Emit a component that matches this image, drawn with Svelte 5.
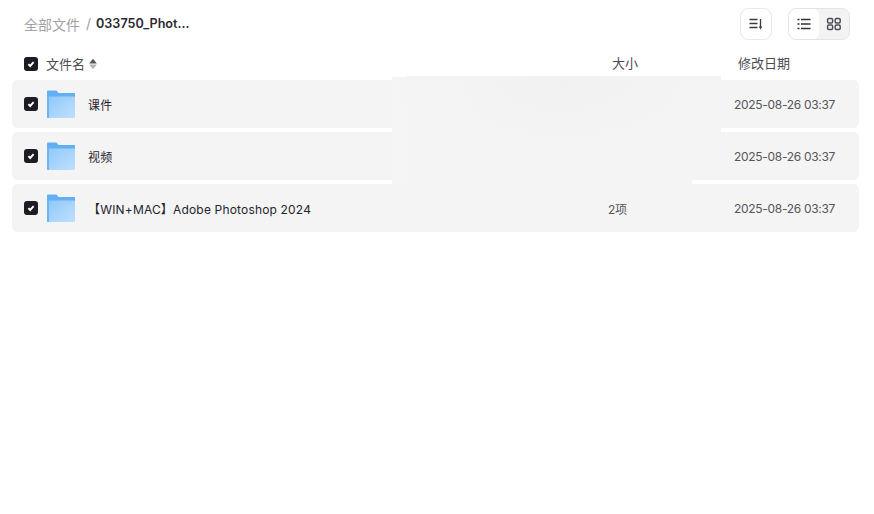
<script>
  const rows = [
    { name: '课件', size: '', date: '2025-08-26 03:37' },
    { name: '视频', size: '', date: '2025-08-26 03:37' },
    { name: '【WIN+MAC】Adobe Photoshop 2024', size: '2项', date: '2025-08-26 03:37' }
  ];
</script>

{#snippet check()}
  <span class="check">
    <svg width="14" height="14" viewBox="0 0 14 14"><path d="M4.400 7.200 6.200 9 9.600 5.200" fill="none" stroke="#fff" stroke-width="1.900"/></svg>
  </span>
{/snippet}

<div class="page">
  <header class="top">
    <nav class="crumbs">
      <span class="root">全部文件</span>
      <span class="sep">/</span>
      <span class="current">033750_Phot...</span>
    </nav>
    <div class="tools">
      <button class="sort" aria-label="排序">
        <svg width="16" height="16" viewBox="0 0 16 16"><path d="M1.500 3.500h8M1.500 7.500h8M1.500 11.500h8" stroke="#3a3a40" stroke-width="1.300" fill="none"/><path d="M12.500 3v9" stroke="#3a3a40" stroke-width="1.300"/><path d="M10.700 10.600h3.600L12.500 13.400z" fill="#3a3a40"/></svg>
      </button>
      <div class="switch">
        <button class="on" aria-label="列表">
          <svg width="16" height="16" viewBox="0 0 16 16"><path d="M5 3.500h9.500M5 8h9.500M5 12.500h9.500M1.500 3.500h2M1.500 8h2M1.500 12.500h2" stroke="#303036" stroke-width="1.300" fill="none"/></svg>
        </button>
        <button aria-label="网格">
          <svg width="16" height="16" viewBox="0 0 16 16" fill="none" stroke="#4f4f55" stroke-width="1.500"><rect x="1.600" y="2.600" width="5" height="4.400" rx="1.200"/><rect x="9.200" y="2.600" width="5" height="4.400" rx="1.200"/><rect x="1.600" y="9" width="5" height="4.400" rx="1.200"/><rect x="9.200" y="9" width="5" height="4.400" rx="1.200"/></svg>
        </button>
      </div>
    </div>
  </header>

  <div class="head">
    <div class="c-name">
      {@render check()}
      <span class="hname">文件名</span>
      <svg class="updown" width="8" height="12" viewBox="0 0 8 12"><path d="M4 .8 7.800 5.400H.2z" fill="#55555b"/><path d="M4 11.200 .2 6.600h7.600z" fill="#b4b4b8"/></svg>
    </div>
    <div class="c-size">大小</div>
    <div class="c-date">修改日期</div>
  </div>

  <div class="list">
    {#each rows as r}
      <div class="row">
        <div class="c-name">
          {@render check()}
          <svg class="folder" width="30" height="30" viewBox="0 0 30 30">
            <defs>
              <linearGradient id="fg" x1="0" y1="0" x2="1" y2="1"><stop offset="0" stop-color="#8fc8fa"/><stop offset="1" stop-color="#bfe0fd"/></linearGradient>
            </defs>
            <path d="M1 2.500A1 1 0 0 1 2 1.500h8.500l2 2.500H28a1 1 0 0 1 1 1V12H1z" fill="#62b0f3"/>
            <path d="M1.500 7.500H28a1 1 0 0 1 1 1V28a1 1 0 0 1-1 1H2a1 1 0 0 1-1-1V8z" fill="url(#fg)"/>
            <path d="M1 7v21a1 1 0 0 0 1 1h1V7z" fill="#6ab5f5"/>
            <rect x="22" y="8" width="5" height="2" fill="#a3cff6"/>
          </svg>
          <span class="name">{r.name}</span>
        </div>
        <div class="c-size val">{r.size}</div>
        <div class="c-date val">{r.date}</div>
      </div>
    {/each}
  </div>

  <div class="patch"></div>
</div>

<style>
  :global(body) { margin: 0; background: #fff; }
  .page {
    position: relative;
    width: 874px;
    height: 514px;
    overflow: hidden;
    font-family: "Inter", "Noto Sans CJK SC", sans-serif;
    color: #25252b;
  }
  .top {
    height: 48px;
    display: flex;
    align-items: center;
    justify-content: space-between;
    padding: 0 24px;
    box-sizing: border-box;
  }
  .crumbs { display: flex; align-items: center; gap: 6px; font-size: 14px; margin-top: -1px; }
  .root { color: #a1a1a5; }
  .sep { color: #a1a1a5; }
  .current { font-weight: 600; color: #2b2b31; font-size: 12.600px; margin-left: -1px; }
  .tools { display: flex; gap: 16px; }
  button {
    border: 0; padding: 0; background: none;
    display: flex; align-items: center; justify-content: center;
  }
  .sort {
    width: 32px; height: 32px; box-sizing: border-box;
    border: 1px solid #e8e8ea; border-radius: 8px; background: #fff;
  }
  .switch {
    display: flex; width: 62px; height: 32px; box-sizing: border-box;
    border: 1px solid #e4e4e6; border-radius: 8px; background: #f3f3f4; overflow: hidden;
  }
  .switch button { width: 30px; height: 30px; }
  .switch .on { background: #fff; border-radius: 6px; }
  .head {
    display: flex; align-items: center; height: 32px; padding: 0 24px 0 12px;
    font-size: 13px; color: #4b4b52; line-height: 30px;
  }
  .c-name { flex: 0 0 584px; display: flex; align-items: center; padding-left: 12px; box-sizing: border-box; }
  .c-size { flex: 0 0 126px; }
  .c-date { flex: 0 0 auto; }
  .head .c-size { padding: 0 0 2px 16px; box-sizing: border-box; }
  .head .c-date { padding: 0 0 2px 16px; }
  .hname { margin-left: 8px; }
  .updown { margin-left: 4px; }
  .check {
    width: 14px; height: 14px; border-radius: 3px; background: #1c1c22;
    display: inline-flex; flex: none;
  }
  .list {
    display: flex; flex-direction: column; gap: 4px; padding: 0 15px 0 12px;
  }
  .row {
    height: 48px; display: flex; align-items: center;
    background: #f4f4f5; border-radius: 6px;
  }
  .folder { margin-left: 8px; flex: none; }
  .name { margin-left: 12px; font-size: 12px; letter-spacing: .17px; color: #25252b; }
  .val { font-size: 12px; color: #55555b; letter-spacing: -.3px; }
  .row .c-size { flex-basis: 138px; padding-left: 12px; box-sizing: border-box; }
  .patch {
    position: absolute; left: 392px; top: 76px; width: 329px; height: 108px;
    clip-path: polygon(0 1px, 14px 1px, 14px 0, 100% 0, 100% 56px, 300px 56px, 300px 100%, 0 100%);
    background:
      radial-gradient(ellipse 170px 85px at 52% 0, #f1f1f1, rgba(241,241,241,0) 100%),
      linear-gradient(90deg, #f6f5f5, #f4f4f4 30%);
  }
</style>
